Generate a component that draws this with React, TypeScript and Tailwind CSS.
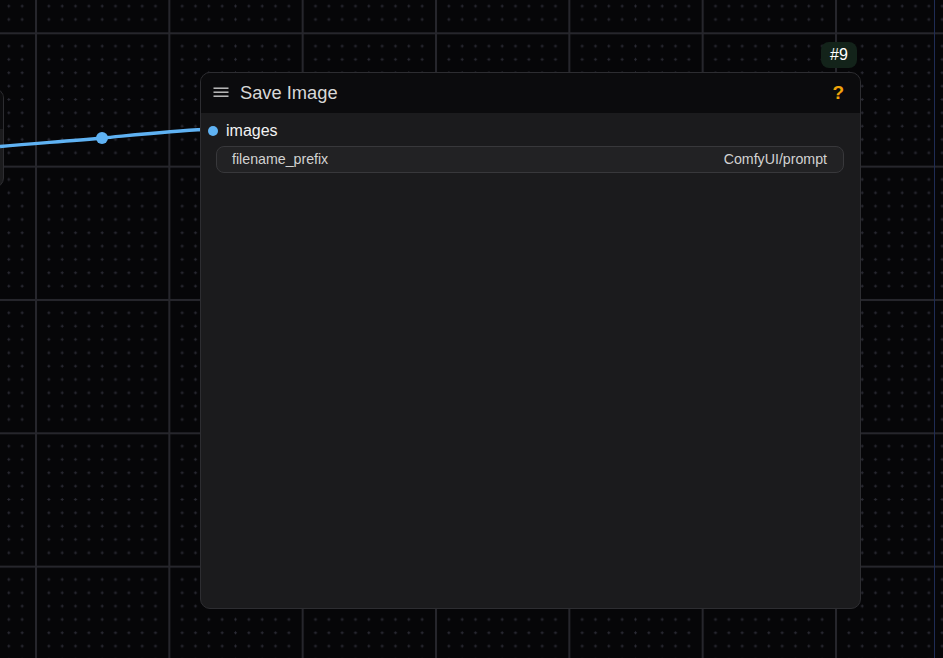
import React from 'react';

const MINOR = 133.333 / 10;

// background dot/cross grid of the node canvas
const CanvasGrid = () => {
  const marks: React.ReactNode[] = [];
  for (let i = 1; i < 10; i++) {
    for (let j = 1; j < 10; j++) {
      const x = 1 + i * MINOR - 0.5;
      const y = 1 + j * MINOR - 0.5;
      marks.push(
        <g key={`${i}-${j}`} fill="#2b2b35">
          <rect x={x - 1.5} y={y - 0.5} width={3} height={1} />
          <rect x={x - 0.5} y={y - 1.5} width={1} height={3} />
        </g>
      );
    }
  }
  return (
    <svg className="absolute inset-0" width={943} height={658}>
      <defs>
        <pattern
          id="grid"
          patternUnits="userSpaceOnUse"
          x={35}
          y={32.3}
          width={133.333}
          height={133.333}
        >
          {marks}
          <rect x={0} y={0} width={2} height={133.333} fill="#26262c" />
          <rect x={0} y={0} width={133.333} height={2} fill="#26262c" />
        </pattern>
      </defs>
      <rect width={943} height={658} fill="url(#grid)" />
      <rect x={934} y={0} width={1} height={658} fill="#1f2c54" />
    </svg>
  );
};

const Wire = () => (
  <svg className="absolute inset-0 pointer-events-none" width={943} height={658}>
    <path
      d="M 0 146.5 C 40 143, 70 141, 102 138 S 170 131, 205 129.5"
      fill="none"
      stroke="#5fb2f3"
      strokeWidth={3.4}
    />
    <circle cx={102} cy={138} r={6} fill="#5fb2f3" />
  </svg>
);

const MenuIcon = () => (
  <svg width={16} height={12} viewBox="0 0 16 12" className="shrink-0">
    <rect x={0.5} y={0.5} width={15} height={1.4} fill="#c8c8c8" />
    <rect x={0.5} y={4.5} width={15} height={1.4} fill="#c8c8c8" />
    <rect x={0.5} y={8.5} width={15} height={1.4} fill="#c8c8c8" />
  </svg>
);

export default function App() {
  return (
    <div
      className="relative w-[943px] h-[658px] overflow-hidden bg-[#060608]"
      style={{ fontFamily: '"Liberation Sans", Arial, sans-serif' }}
    >
      <CanvasGrid />

      {/* Node cut off at the left edge */}
      <div className="absolute left-[-196px] top-[88px] w-[200px] h-[100px] rounded-[10px] border border-[#2d2d31] bg-[#1b1b1d] overflow-hidden">
        <div className="h-[40px] bg-[#0c0c0e]" />
      </div>

      <Wire />

      {/* Node id badge */}
      <div className="absolute left-[821px] top-[42px] w-[36px] h-[26px] rounded-[8px] bg-[#13231a] flex items-center justify-center text-[16px] text-white">
        #9
      </div>

      {/* Save Image node */}
      <div className="absolute left-[200px] top-[72px] w-[661px] h-[537px] rounded-[10px] border border-[#2d2d31] bg-[#1b1b1d] overflow-hidden flex flex-col">
        <div className="h-[40px] shrink-0 bg-[#0b0b0d] flex items-center pl-[12px] pr-[16px]">
          <MenuIcon />
          <span className="ml-[11px] text-[18.3px] text-[#d8d8d8]">Save Image</span>
          <span className="ml-auto text-[19px] font-bold text-[#f0a30a]">?</span>
        </div>
        <div className="flex flex-col pt-[7px]">
          <div className="flex items-center h-[22px] pl-[7px]">
            <span className="w-[10px] h-[10px] rounded-full bg-[#5fb2f3]" />
            <span className="ml-[8px] text-[16px] text-[#f2f2f2]">images</span>
          </div>
          <div className="mt-[4px] ml-[15px] mr-[16px] h-[27px] rounded-[8px] border border-[#38383b] bg-[#222224] flex items-center justify-between pl-[15px] pr-[16px] text-[14.2px] text-[#d2d2d2]">
            <span>filename_prefix</span>
            <span>ComfyUI/prompt</span>
          </div>
        </div>
      </div>
    </div>
  );
}
